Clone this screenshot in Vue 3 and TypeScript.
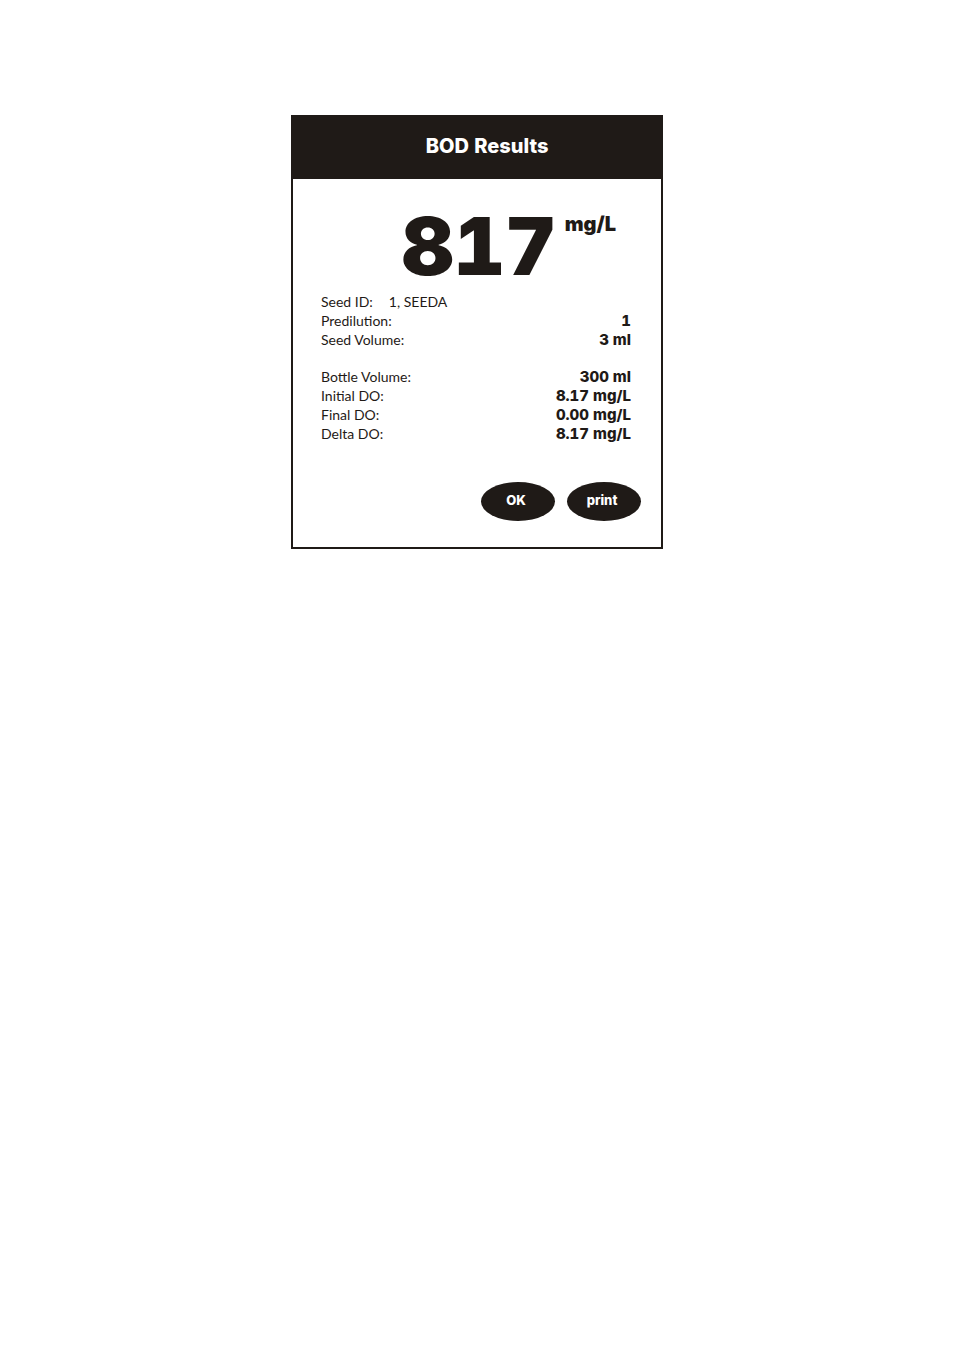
<script setup lang="ts">
interface Reading {
  label: string
  value: string
  inline?: boolean
}

const result = { value: '817', unit: 'mg/L' }

const groups: Reading[][] = [
  [
    { label: 'Seed ID:', value: '1, SEEDA', inline: true },
    { label: 'Predilution:', value: '1' },
    { label: 'Seed Volume:', value: '3 ml' },
  ],
  [
    { label: 'Bottle Volume:', value: '300 ml' },
    { label: 'Initial DO:', value: '8.17 mg/L' },
    { label: 'Final DO:', value: '0.00 mg/L' },
    { label: 'Delta DO:', value: '8.17 mg/L' },
  ],
]
</script>

<template>
  <main class="page">
    <section class="card" aria-labelledby="title">
      <header class="bar">
        <h1 id="title" class="title">BOD Results</h1>
      </header>
      <p class="result">
        <span class="number">{{ result.value }}</span>
        <span class="unit">{{ result.unit }}</span>
      </p>
      <div class="readings">
        <dl v-for="(group, i) in groups" :key="i" class="group">
          <div v-for="row in group" :key="row.label" class="row" :class="{ inline: row.inline }">
            <dt>{{ row.label }}</dt>
            <dd>{{ row.value }}</dd>
          </div>
        </dl>
      </div>
      <footer class="actions">
        <button type="button" class="action">OK</button>
        <button type="button" class="action">print</button>
      </footer>
    </section>
  </main>
</template>

<style>
body {
  margin: 0;
  background: #fff;
}
</style>

<style scoped>
.page {
  padding: 115px 16px 48px;
  color: #1f1a17;
  font-family: Inter, "Open Sans", sans-serif;
  font-variant-numeric: tabular-nums;
}

.card {
  box-sizing: border-box;
  max-width: 372px;
  margin: 0 auto;
  border: 2px solid #1f1a17;
  border-top: 0;
}

.bar {
  padding: 17px 0 19px 20px;
  background: #1f1a17;
  color: #fff;
  text-align: center;
}

.title {
  margin: 0;
  font-size: 20px;
  line-height: 28px;
  font-weight: 800;
}

.result {
  display: flex;
  justify-content: flex-end;
  align-items: flex-start;
  gap: 8px;
  margin: 0;
  padding: 20px 45px 0 0;
  font-weight: 900;
}

.number {
  font-size: 80px;
  line-height: 93px;
}

.unit {
  font-size: 20px;
  line-height: 50px;
  font-weight: 900;
}

.readings {
  display: flex;
  flex-direction: column;
  gap: 18px;
  padding: 0 30px 0 28px;
  font-size: 15px;
  line-height: 19px;
}

.group {
  margin: 0;
}

.row {
  display: flex;
  justify-content: space-between;
}

.row dt,
.row.inline dd {
  font-family: Lato, "Open Sans", sans-serif;
  font-size: 14px;
  font-weight: 400;
}

.row dd {
  margin: 0;
  font-weight: 800;
}

.row.inline {
  justify-content: flex-start;
  gap: 16px;
}

.actions {
  display: flex;
  justify-content: flex-end;
  gap: 12px;
  padding: 39px 20px 26px;
}

.action {
  width: 74px;
  height: 39px;
  padding: 0 4px 4px 0;
  border: 0;
  border-radius: 50%;
  background: #1f1a17;
  color: #fff;
  font: 800 13px/20px Inter, "Open Sans", sans-serif;
  cursor: pointer;
}
</style>
